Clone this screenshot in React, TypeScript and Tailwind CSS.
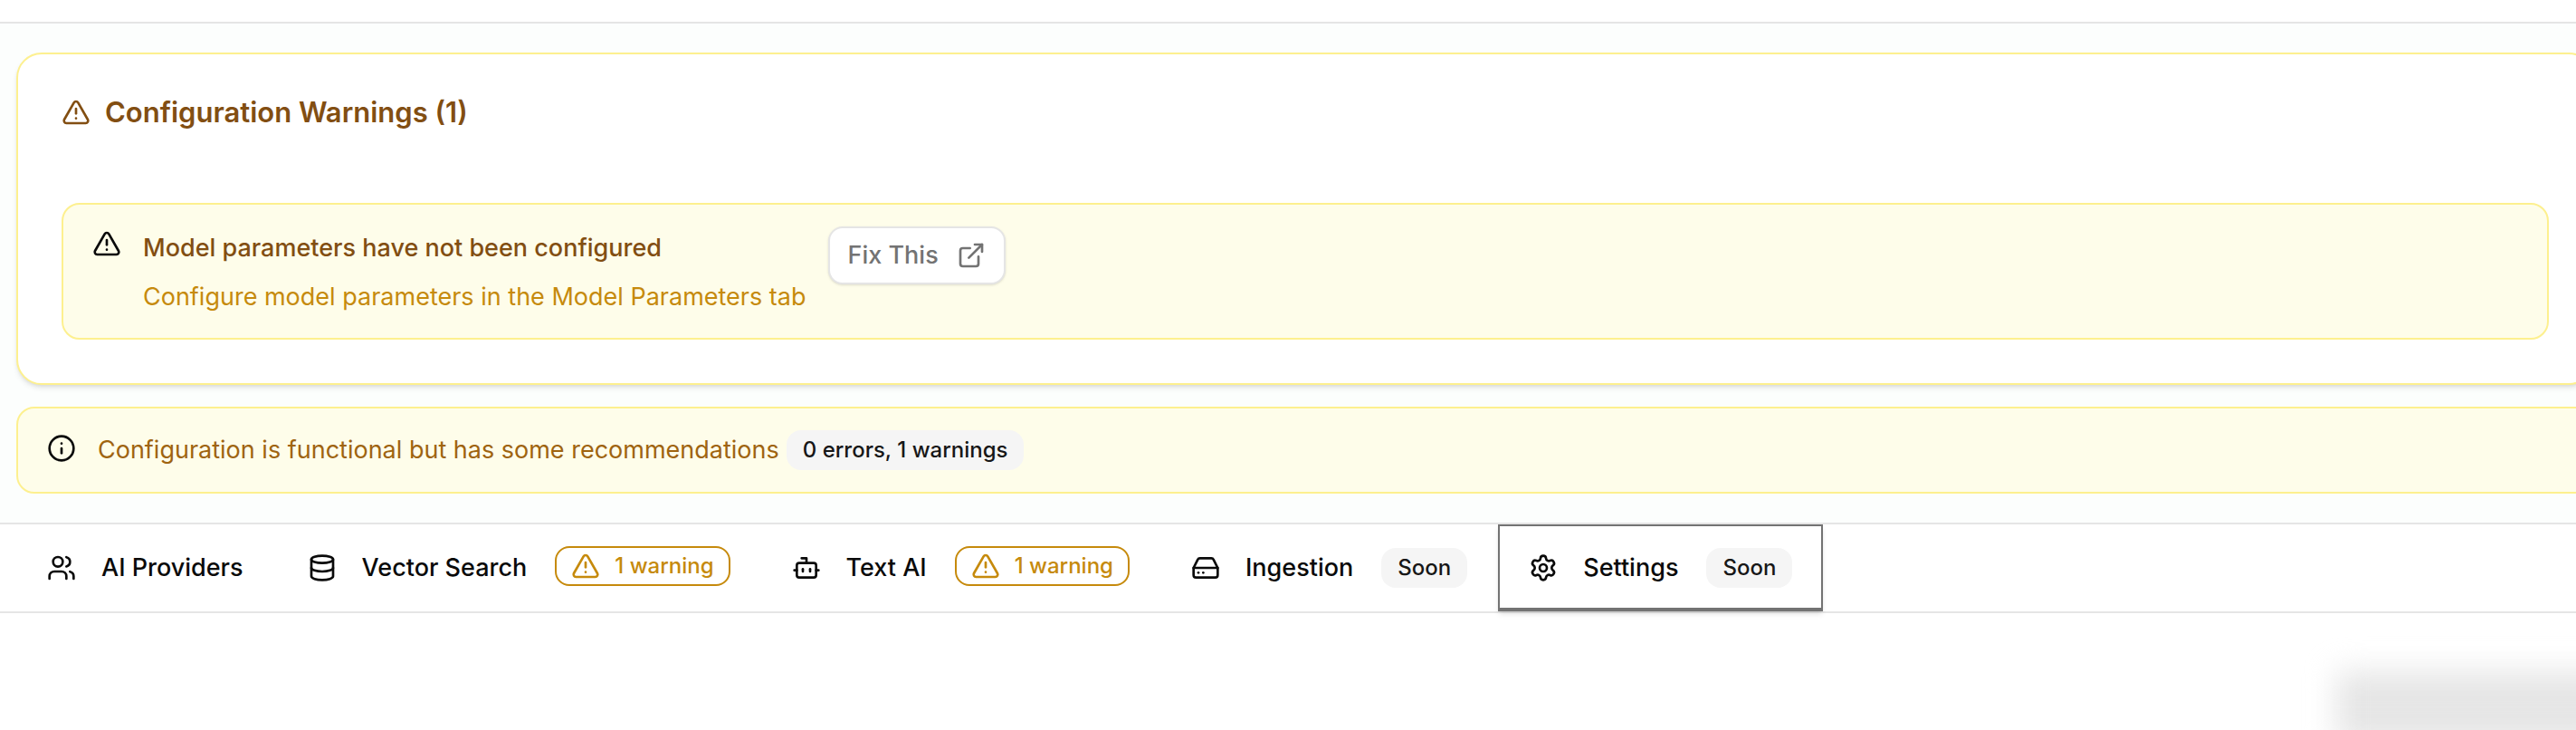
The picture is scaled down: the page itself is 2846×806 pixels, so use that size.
import type { ReactNode } from "react";
import {
  Bot,
  Database,
  ExternalLink,
  HardDrive,
  Info,
  Settings,
  TriangleAlert,
  Users,
  type LucideIcon,
} from "lucide-react";

function SoftBadge({ children }: { children: ReactNode }) {
  return (
    <span className="flex h-11 shrink-0 items-center rounded-2xl bg-neutral-100 px-[18px] text-2xl font-medium text-neutral-900">
      {children}
    </span>
  );
}

function WarningBadge({ children }: { children: ReactNode }) {
  return (
    <span className="-mt-1 flex h-11 shrink-0 items-center gap-4 rounded-2xl border-2 border-[#c68a0c] px-4 text-2xl font-medium text-[#c68a0c]">
      <TriangleAlert size={32} strokeWidth={2} />
      {children}
    </span>
  );
}

type Tab = { label: string; icon: LucideIcon; warning?: string; soon?: boolean; active?: boolean };

const tabs: Tab[] = [
  { label: "AI Providers", icon: Users },
  { label: "Vector Search", icon: Database, warning: "1 warning" },
  { label: "Text AI", icon: Bot, warning: "1 warning" },
  { label: "Ingestion", icon: HardDrive, soon: true },
  { label: "Settings", icon: Settings, soon: true, active: true },
];

function TabButton({ label, icon: Icon, warning, soon, active }: Tab) {
  return (
    <button
      type="button"
      role="tab"
      aria-selected={!!active}
      className={
        active
          ? "flex h-24 shrink-0 items-center gap-7 border-2 border-b-4 border-[#737373] px-8 pt-0.5 shadow-md"
          : "flex h-24 shrink-0 items-center gap-7 border-2 border-b-4 border-transparent px-8 pt-0.5"
      }
    >
      <Icon size={32} strokeWidth={2} />
      <span className="pr-[3px] text-[27px] leading-9 font-medium">{label}</span>
      {warning && <WarningBadge>{warning}</WarningBadge>}
      {soon && <SoftBadge>Soon</SoftBadge>}
    </button>
  );
}

export default function App() {
  return (
    <div className="min-h-screen overflow-hidden bg-white font-[Inter,sans-serif] text-neutral-950">
      <header className="h-[26px] border-b-2 border-[#e5e5e5]" />

      <main>
        <div className="-mr-5 flex flex-col gap-6 bg-[#fcfefd] pt-8 pb-8 pl-[18px]">
          <section className="rounded-[28px] border-2 border-[#fdf08f] bg-white p-12 shadow-md">
            <h2 className="flex h-8 items-center gap-4 text-[31px] font-semibold text-[#824e12]">
              <TriangleAlert size={32} strokeWidth={2} />
              Configuration Warnings (1)
            </h2>
            <div className="mt-[84px] flex items-start gap-4 rounded-[20px] border-2 border-[#fdf08f] bg-[#fefdea] py-6 pl-8">
              <TriangleAlert size={32} strokeWidth={2} className="mt-[3px] mr-2 shrink-0" />
              <div className="mr-2 text-[27px]">
                <p className="mb-3 h-[42px] leading-[48px] font-medium text-[#824e12]">
                  Model parameters have not been configured
                </p>
                <p className="h-[45px] leading-[48px] text-[#c68a0c]">
                  Configure model parameters in the Model Parameters tab
                </p>
              </div>
              <button
                type="button"
                className="flex h-16 shrink-0 items-center gap-5 rounded-2xl border-2 border-[#e5e5e5] bg-white px-5 text-[27px] font-medium text-[#737373] shadow-sm"
              >
                Fix This
                <ExternalLink size={32} strokeWidth={2} />
              </button>
            </div>
          </section>

          <section className="flex h-24 items-center rounded-[20px] border-2 border-[#fdf08f] bg-[#fefdea] pl-8">
            <Info size={32} strokeWidth={2} className="mr-6 -mt-1 shrink-0" />
            <p className="mr-2 text-[27px] leading-9 text-[#9f6410]">
              Configuration is functional but has some recommendations
            </p>
            <SoftBadge>0 errors, 1 warnings</SoftBadge>
          </section>
        </div>

        <div role="tablist" className="flex border-y-2 border-[#e5e5e5] pl-[18px]">
          {tabs.map((tab) => (
            <TabButton key={tab.label} {...tab} />
          ))}
        </div>

        <div className="flex h-[129px] justify-end overflow-hidden pt-16">
          <div className="-mr-10 h-20 w-[305px] shrink-0 rounded-lg bg-[#e6e6e6] blur-lg" />
        </div>
      </main>
    </div>
  );
}
